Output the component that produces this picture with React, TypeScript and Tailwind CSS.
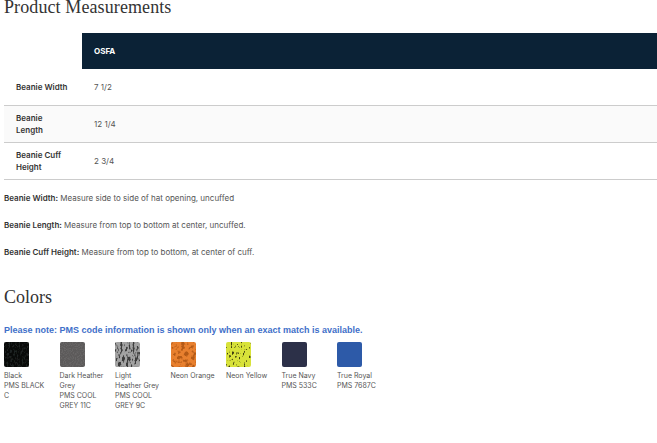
const rows = [
  { label: "Beanie Width", value: "7 1/2", shade: false },
  { label: "Beanie Length", value: "12 1/4", shade: true },
  { label: "Beanie Cuff Height", value: "2 3/4", shade: false },
];

const notes = [
  { label: "Beanie Width:", text: "Measure side to side of hat opening, uncuffed" },
  { label: "Beanie Length:", text: "Measure from top to bottom at center, uncuffed." },
  { label: "Beanie Cuff Height:", text: "Measure from top to bottom, at center of cuff." },
];

const colors = [
  { name: "Black", pms: "PMS BLACK C", base: "#080a09", fleck: "#1e2220", freq: "0.6 0.35", alpha: "5 0 0 0 -2.4" },
  { name: "Dark Heather Grey", pms: "PMS COOL GREY 11C", base: "#5c5a5a", fleck: "#686666", freq: "0.9 0.9", alpha: "5 0 0 0 -2.3" },
  { name: "Light Heather Grey", pms: "PMS COOL GREY 9C", base: "#a2a2a2", fleck: "#3a3a3a", freq: "0.5 0.2", alpha: "6 0 0 0 -2.9" },
  { name: "Neon Orange", pms: "", base: "#e8802f", fleck: "#b45a18", freq: "0.28 0.28", alpha: "5 0 0 0 -2.4" },
  { name: "Neon Yellow", pms: "", base: "#d8e23a", fleck: "#3c3c10", freq: "0.6 0.3", alpha: "7 0 0 0 -4.2" },
  { name: "True Navy", pms: "PMS 533C", base: "#2c3048", fleck: "", freq: "", alpha: "" },
  { name: "True Royal", pms: "PMS 7687C", base: "#2d5aa8", fleck: "", freq: "", alpha: "" },
];

function Swatch({ id, base, fleck, freq, alpha }: { id: string; base: string; fleck: string; freq: string; alpha: string }) {
  return (
    <svg width="25" height="25" viewBox="0 0 25 25" className="block">
      <defs>
        <clipPath id={`clip-${id}`}>
          <rect width="25" height="25" rx="2" />
        </clipPath>
        {freq && (
          <filter id={`grain-${id}`} x="0" y="0" width="100%" height="100%">
            <feTurbulence type="fractalNoise" baseFrequency={freq} numOctaves={2} seed={4} />
            <feColorMatrix values={`0 0 0 0 0  0 0 0 0 0  0 0 0 0 0  ${alpha}`} />
            <feComposite in="SourceGraphic" operator="in" />
          </filter>
        )}
      </defs>
      <g clipPath={`url(#clip-${id})`}>
        <rect width="25" height="25" fill={base} />
        {freq && <rect width="25" height="25" fill={fleck} filter={`url(#grain-${id})`} />}
      </g>
    </svg>
  );
}

export default function App() {
  return (
    <div className="h-[443px] w-[657px] overflow-hidden bg-white pl-1 font-['Inter',sans-serif] text-[#555]">
      <h2 className="h-[33px] font-['Liberation_Serif',serif] text-[18px] leading-[15px] tracking-[0.1px] text-[#333]">
        Product Measurements
      </h2>

      <div className="grid grid-cols-[78px_1fr]">
        <div />
        <div className="flex h-9 items-center bg-[#0b2236] pl-3 text-[8px] font-bold text-white">OSFA</div>
        {rows.map((r) => (
          <div key={r.label} className="contents">
            <div
              className={`flex h-[37px] items-center border-b border-[#ccc] pr-3 pl-[12px] text-[8px] leading-3 font-semibold text-[#333] ${r.shade ? "bg-[#fafafa]" : ""}`}
            >
              {r.label}
            </div>
            <div
              className={`flex h-[37px] items-center border-b border-[#ccc] pl-3 text-[8px] ${r.shade ? "bg-[#fafafa]" : ""}`}
            >
              {r.value}
            </div>
          </div>
        ))}
      </div>

      <div className="mt-[13px] flex flex-col gap-[17px] text-[8px] leading-[10px]">
        {notes.map((n) => (
          <p key={n.label}>
            <span className="font-semibold text-[#333]">{n.label}</span> {n.text}
          </p>
        ))}
      </div>

      <h2 className="mt-[28px] font-['Liberation_Serif',serif] text-[18px] leading-[24px] text-[#333]">
        Colors
      </h2>
      <p className="mt-[15px] font-['Liberation_Sans',sans-serif] text-[9px] leading-[12px] font-bold text-[#3f6fc9]">
        Please note: PMS code information is shown only when an exact match is available.
      </p>

      <div className="mt-[6px] flex">
        {colors.map((c, i) => (
          <div key={c.name} className="w-[55.5px] shrink-0 pr-[11px]">
            <Swatch id={String(i)} base={c.base} fleck={c.fleck} freq={c.freq} alpha={c.alpha} />
            <div className="mt-[4px] text-[7px] leading-[10px]">
              <div>{c.name}</div>
              {c.pms && <div>{c.pms}</div>}
            </div>
          </div>
        ))}
      </div>
    </div>
  );
}
